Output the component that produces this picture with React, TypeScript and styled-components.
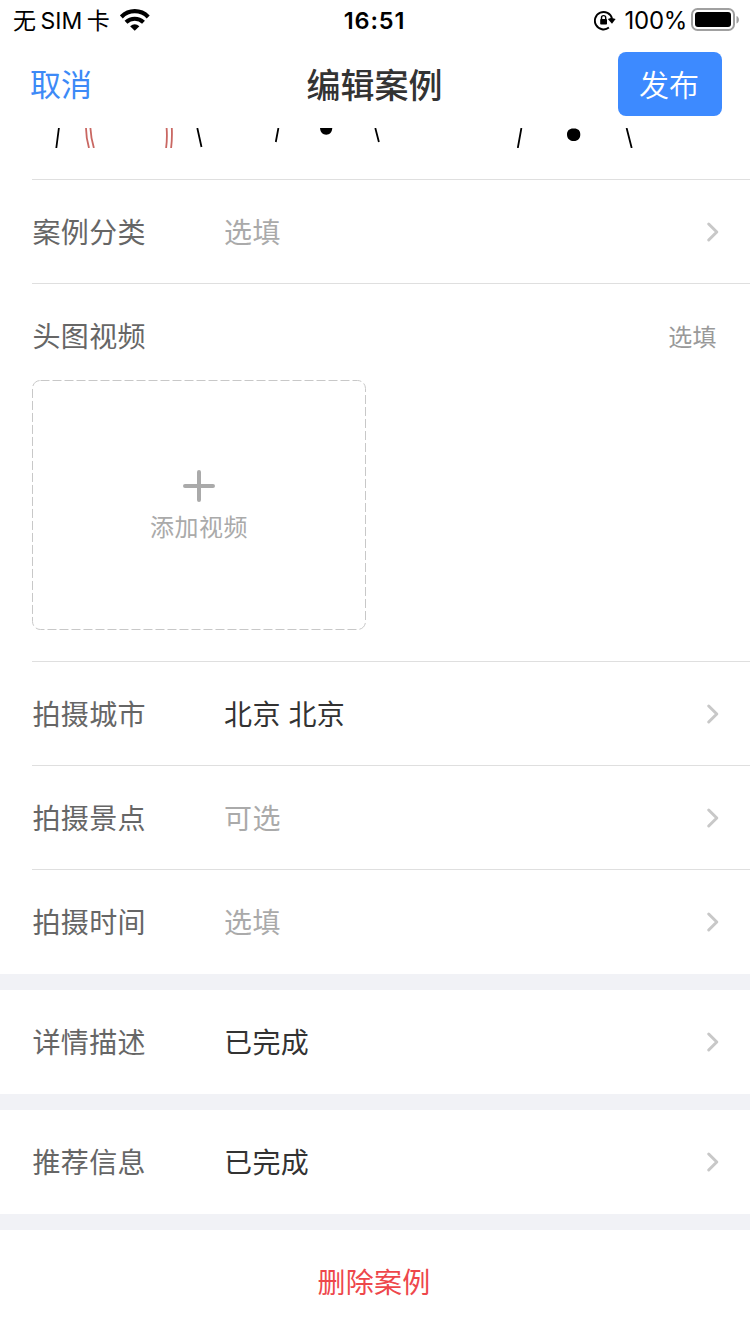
import React from "react";
import styled, { createGlobalStyle } from "styled-components";

const GlobalStyle = createGlobalStyle`
  * { box-sizing: border-box; }
  html, body { margin: 0; background: #fff; }
  body {
    font-family: "Noto Sans CJK SC", sans-serif;
    font-size: 28px;
  }
  svg { display: block; flex: none; }
`;

const Screen = styled.main`
  width: 750px;
  height: 1334px;
  display: flex;
  flex-direction: column;
  overflow: hidden;
  background: #fff;
`;

const StatusBar = styled.header`
  height: 40px;
  flex: none;
  display: grid;
  grid-template-columns: 1fr auto 1fr;
  align-items: center;
  padding: 0 11px 0 13px;
  color: #000;
  font-family: Inter, "Noto Sans CJK SC", sans-serif;
  font-size: 24px;
  line-height: 40px;
`;

const StatusSide = styled.div<{ $end?: boolean }>`
  display: flex;
  align-items: center;
  justify-content: ${(p) => (p.$end ? "flex-end" : "flex-start")};
`;

const Carrier = styled.span`
  display: flex;
  gap: 4.5px;
  width: 107px;
  padding-top: 2px;
  font-size: 23px;
  line-height: 38px;
  white-space: nowrap;
`;

const Clock = styled.time`
  padding: 2px 3px 0 0;
  font-weight: 600;
  font-size: 23.5px;
  line-height: 38px;
  letter-spacing: 0.9px;
`;

const Percent = styled.span`
  padding-top: 2px;
  margin: 0 4px 0 9px;
  line-height: 38px;
  letter-spacing: -0.3px;
`;

const NavBar = styled.nav`
  height: 88px;
  flex: none;
  display: grid;
  grid-template-columns: 1fr auto 1fr;
  align-items: center;
  padding: 0 28px 0 30px;
`;

const CancelButton = styled.button`
  justify-self: start;
  padding: 0 0 3px;
  border: 0;
  background: none;
  color: #3d8af7;
  font: 400 31px/44px "Noto Sans CJK SC", sans-serif;
`;

const Title = styled.h1`
  margin: 0;
  padding: 0 3px 1px 0;
  color: #333;
  font-size: 34px;
  font-weight: 500;
  line-height: 48px;
`;

const PublishButton = styled.button`
  justify-self: end;
  width: 104px;
  height: 64px;
  padding: 0 2px 3px 0;
  border: 0;
  border-radius: 8px;
  background: #3d8aff;
  color: #fff;
  font: 350 30px/60px "Noto Sans CJK SC", sans-serif;
`;

const Preview = styled.section`
  height: 52px;
  flex: none;
  margin-left: 32px;
  border-bottom: 1px solid #dfdfdf;
`;

const Row = styled.div<{ $line?: boolean }>`
  height: 104px;
  flex: none;
  display: flex;
  align-items: center;
  margin-left: 32px;
  padding-right: 30px;
  border-bottom: ${(p) => (p.$line ? "1px solid #dfdfdf" : "0")};
  line-height: 40px;
  letter-spacing: 0.4px;
`;

const Label = styled.span`
  width: 192px;
  padding: 0 0 2px 0.4px;
  color: #666;
`;

const Value = styled.span<{ $empty?: boolean }>`
  flex: 1;
  padding-bottom: 2px;
  color: ${(p) => (p.$empty ? "#aaa" : "#333")};
  word-spacing: 1px;
`;

const MediaSection = styled.section`
  height: 378px;
  flex: none;
  margin-left: 32px;
  border-bottom: 1px solid #dfdfdf;
`;

const MediaHeader = styled.div`
  height: 96px;
  display: flex;
  align-items: center;
  justify-content: space-between;
  padding: 6px 33px 0 0.4px;
  color: #666;
  letter-spacing: 0.4px;
`;

const Hint = styled.span`
  color: #999;
  font-size: 24px;
`;

const UploadBox = styled.button`
  display: grid;
  width: 334px;
  height: 250px;
  padding: 0;
  border: 0;
  background: none;
  color: #aaa;
  font: 400 24px/36px "Noto Sans CJK SC", sans-serif;
  letter-spacing: 0.5px;
`;

const UploadFrame = styled.svg`
  grid-area: 1 / 1;
`;

const UploadContent = styled.span`
  grid-area: 1 / 1;
  display: flex;
  flex-direction: column;
  align-items: center;
  gap: 6px;
  padding-top: 90px;
`;

const Gap = styled.div`
  height: 16px;
  flex: none;
  background: #f1f2f6;
`;

const DeleteButton = styled.button`
  height: 104px;
  flex: none;
  padding: 0 2px 2px 0;
  border: 0;
  background: none;
  color: #ee474b;
  font: 400 28px/40px "Noto Sans CJK SC", sans-serif;
  letter-spacing: 0.3px;
`;

const Wifi = () => (
  <svg width="30" height="22" viewBox="0 0 30 22" fill="none" stroke="#000" strokeWidth="4.2">
    <path d="M1.300 7.900C8.800 .3 20.700 .3 28.200 7.900" />
    <path d="M6 13.200C11 8.600 18.500 8.600 23.500 13.200" />
    <path d="M10.100 17.300Q14.750 13.400 19.400 17.300L14.750 21.800Z" fill="#000" stroke="none" />
  </svg>
);

const RotationLock = () => (
  <svg width="22" height="22" viewBox="0 0 22 22" fill="none" stroke="#000">
    <path d="M14.900 18.600A8.700 8.700 0 1 1 18 9.500" strokeWidth="1.9" />
    <path d="M13.800 10L17.300 8.800L21.600 10L18 14.700Z" fill="#000" stroke="none" />
    <rect x="6.200" y="10" width="6.800" height="5.600" rx="0.8" fill="#000" stroke="none" />
    <path d="M7.500 10.500V8.700a2.100 2.100 0 0 1 4.200 0V10.500" strokeWidth="1.400" />
  </svg>
);

const Battery = () => (
  <svg width="48" height="24" viewBox="0 0 48 24">
    <rect x="1" y="1" width="42" height="21" rx="5.500" fill="none" stroke="#a0a0a0" strokeWidth="2" />
    <rect x="4" y="4" width="36" height="15" rx="3" fill="#000" />
    <path d="M45.500 8v7.500c1.600-.6 2.400-2 2.400-3.750S47.100 8.600 45.500 8Z" fill="#a0a0a0" />
  </svg>
);

const Sketches = () => (
  <svg width="718" height="20" viewBox="32 128 718 20" fill="none" stroke="#000" strokeWidth="1.800">
    <path d="M58.900 128L56.300 148M197.300 128L201.500 147M278.400 128L275.800 142M375.300 128L378.900 142M521.400 128L517.800 148M626.600 128L631.700 148" />
    <path d="M86 128Q86.200 139 89 148M90.400 128Q91 139 93.900 148M166.600 128Q167.400 138 166.100 148M171.800 128Q172.300 138 171.100 148" stroke="#c96762" strokeWidth="1.800" />
    <path d="M320 128H332.300C332 132.500 329.700 134.700 326.200 134.700S320.400 132.500 320 128Z" fill="#000" stroke="none" />
    <path d="M567 134.400C567 130.500 569.500 128.300 573.700 128.500C577.900 128.300 580.400 130.500 580.300 134.500C580.300 138.500 577.900 141 574 141C569.800 141 567 138.500 567 134.400Z" fill="#000" stroke="none" />
  </svg>
);

const Chevron = () => (
  <svg width="14" height="22" viewBox="0 0 14 22" fill="none" stroke="#c8c8c8" strokeWidth="3" strokeLinecap="round" strokeLinejoin="round">
    <path d="M2.700 3L10.800 11L2.700 19" />
  </svg>
);

const Plus = () => (
  <svg width="32" height="32" viewBox="0 0 32 32" stroke="#aaa" strokeWidth="4" strokeLinecap="round">
    <path d="M2 16H30M16 2V30" />
  </svg>
);

type FieldProps = { label: string; value: string; empty?: boolean; line?: boolean };

const Field = ({ label, value, empty, line }: FieldProps) => (
  <Row $line={line}>
    <Label>{label}</Label>
    <Value $empty={empty}>{value}</Value>
    <Chevron />
  </Row>
);

export default function App() {
  return (
    <Screen>
      <GlobalStyle />
      <StatusBar>
        <StatusSide>
          <Carrier><span>无</span><span>SIM</span><span>卡</span></Carrier>
          <Wifi />
        </StatusSide>
        <Clock>16:51</Clock>
        <StatusSide $end>
          <RotationLock />
          <Percent>100%</Percent>
          <Battery />
        </StatusSide>
      </StatusBar>
      <NavBar>
        <CancelButton>取消</CancelButton>
        <Title>编辑案例</Title>
        <PublishButton>发布</PublishButton>
      </NavBar>
      <Preview><Sketches /></Preview>
      <Field label="案例分类" value="选填" empty line />
      <MediaSection>
        <MediaHeader>
          <span>头图视频</span>
          <Hint>选填</Hint>
        </MediaHeader>
        <UploadBox>
          <UploadFrame width="334" height="250" viewBox="0 0 334 250">
            <rect x="0.5" y="0.5" width="333" height="249" rx="8" fill="none" stroke="#c8c8c8" strokeDasharray="9 3" />
          </UploadFrame>
          <UploadContent>
            <Plus />
            <span>添加视频</span>
          </UploadContent>
        </UploadBox>
      </MediaSection>
      <Field label="拍摄城市" value="北京 北京" line />
      <Field label="拍摄景点" value="可选" empty line />
      <Field label="拍摄时间" value="选填" empty />
      <Gap />
      <Field label="详情描述" value="已完成" />
      <Gap />
      <Field label="推荐信息" value="已完成" />
      <Gap />
      <DeleteButton>删除案例</DeleteButton>
    </Screen>
  );
}
